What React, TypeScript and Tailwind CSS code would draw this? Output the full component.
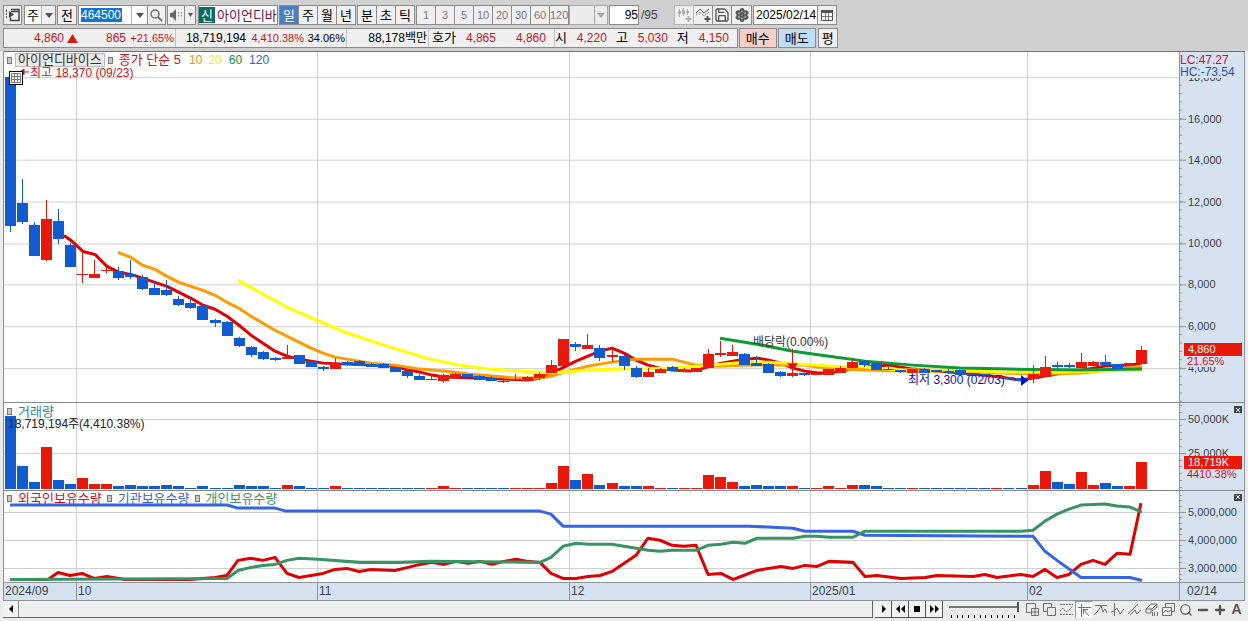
import type { ReactNode } from "react";
import { Minus, Plus, Save, Search, Settings } from "lucide-react";

const UP = "#e8190b";
const DOWN = "#0f5bcf";
const STEP = 12.03;
const FIRST_X = 10.5;

// [direction, high, body top, body bottom, low]
type Candle = ["u" | "d", number, number, number, number];

const CANDLES: Candle[] = [
  ["d", 77, 77, 226, 233], ["d", 179, 203, 222, 224], ["d", 222, 225, 257, 257],
  ["u", 200, 219, 261, 262], ["d", 209, 221, 240, 245], ["d", 244, 246, 268, 268],
  ["u", 254, 275, 276, 284], ["u", 261, 275, 279, 279], ["u", 266, 271, 272, 274],
  ["d", 268, 272, 279, 281], ["d", 261, 275, 278, 280], ["d", 276, 278, 290, 291],
  ["d", 283, 289, 296, 296], ["d", 281, 291, 296, 297], ["d", 297, 300, 306, 307],
  ["d", 301, 304, 309, 310], ["d", 306, 307, 321, 321], ["d", 320, 321, 324, 328],
  ["d", 322, 323, 337, 337], ["d", 338, 339, 347, 348], ["d", 347, 348, 356, 358],
  ["d", 352, 353, 360, 361], ["d", 358, 359, 361, 362], ["u", 346, 358, 360, 360],
  ["d", 356, 356, 365, 365], ["d", 362, 362, 368, 368], ["d", 367, 368, 370, 372],
  ["u", 359, 364, 370, 370], ["d", 362, 363, 366, 366], ["d", 361, 362, 367, 367],
  ["d", 364, 365, 368, 368], ["d", 364, 365, 369, 369], ["d", 368, 368, 373, 373],
  ["d", 371, 372, 377, 379], ["d", 375, 377, 381, 381], ["u", 376, 380, 381, 381],
  ["u", 375, 376, 382, 384], ["u", 374, 375, 379, 379], ["d", 375, 375, 378, 378],
  ["d", 376, 377, 381, 381], ["d", 377, 379, 382, 382], ["d", 379, 382, 383, 384],
  ["u", 375, 380, 381, 381], ["u", 377, 378, 382, 382], ["u", 373, 375, 379, 381],
  ["u", 361, 366, 374, 374], ["u", 340, 340, 367, 367], ["d", 343, 345, 348, 352],
  ["u", 335, 346, 350, 350], ["d", 346, 349, 359, 362], ["u", 351, 356, 358, 363],
  ["d", 356, 357, 367, 371], ["d", 367, 369, 378, 379], ["u", 369, 373, 378, 378],
  ["u", 369, 370, 374, 374], ["d", 367, 368, 372, 372], ["u", 369, 371, 373, 373],
  ["u", 369, 369, 373, 373], ["u", 350, 355, 369, 369], ["u", 342, 354, 356, 358],
  ["u", 346, 353, 357, 357], ["d", 354, 355, 366, 366], ["d", 357, 364, 367, 367],
  ["d", 364, 365, 374, 374], ["d", 372, 373, 377, 378], ["u", 350, 374, 377, 378],
  ["d", 374, 374, 376, 377], ["u", 372, 374, 376, 376], ["u", 370, 370, 376, 376],
  ["u", 367, 369, 374, 374], ["u", 360, 363, 369, 369], ["d", 361, 362, 366, 368],
  ["d", 364, 364, 371, 371], ["d", 368, 370, 371, 371], ["d", 371, 371, 373, 374],
  ["u", 370, 370, 374, 374], ["d", 369, 370, 374, 374], ["d", 371, 371, 373, 373],
  ["d", 370, 372, 374, 375], ["d", 371, 371, 376, 376], ["d", 374, 374, 377, 377],
  ["d", 375, 375, 377, 377], ["u", 376, 376, 378, 378], ["d", 378, 378, 380, 380],
  ["d", 379, 379, 382, 382], ["u", 366, 375, 380, 384], ["u", 357, 368, 378, 378],
  ["d", 363, 366, 368, 370], ["d", 364, 366, 368, 369], ["u", 354, 363, 369, 369],
  ["u", 362, 363, 367, 367], ["d", 356, 363, 366, 366], ["d", 365, 365, 370, 370],
  ["u", 364, 364, 367, 367], ["u", 347, 351, 365, 365],
];

const VOLUMES = [
  72, 22, 6, 41, 8, 4, 10, 4, 4, 2, 3, 2, 2, 3, 2, 1, 2, 1, 1, 3, 2, 2, 1, 3, 2,
  1, 1, 2, 1, 1, 1, 1, 1, 1, 1, 1, 2, 1, 1, 1, 1, 1, 1, 1, 1, 5, 22, 8, 14, 3, 5,
  2, 2, 2, 1, 1, 1, 1, 13, 11, 6, 2, 3, 2, 2, 2, 1, 1, 2, 1, 3, 3, 2, 1, 1, 1, 1,
  1, 1, 1, 1, 1, 1, 1, 1, 3, 17, 6, 4, 16, 3, 5, 2, 2, 26,
];

const AVERAGES = [
  {
    color: "#e00000",
    points:
      "64,236 71,241 83,252 95,255 107,267 119,273 131,275 143,279 155,283 167,287 179,293 191,299 203,306 215,310 227,317 239,326 251,336 263,344 275,352 287,357 299,360 311,362 323,364 347,365 371,366 395,367 408,371 420,373 432,376 444,378 480,379 504,380 528,381 540,379 552,374 564,368 576,362 588,357 600,352 612,349 624,354 636,361 648,366 660,369 672,371 690,372 700,370 721,364 733,362 745,360 757,359 769,361 781,364 793,369 805,372 817,374 829,374 841,372 853,370 865,368 889,366 901,368 913,370 949,373 973,375 1000,378 1021,381 1033,379 1045,377 1057,375 1069,373 1081,371 1093,369 1105,367 1130,366 1142,364",
  },
  {
    color: "#ff9a00",
    points:
      "118,253 131,258 143,266 155,270 167,277 179,283 203,291 215,296 227,303 239,309 251,317 275,331 299,343 311,349 323,354 335,358 347,360 371,364 395,366 420,370 444,372 468,375 492,377 516,379 540,379 552,377 564,373 576,370 588,367 612,363 636,360 672,360 684,363 696,366 721,367 750,366 805,366 817,368 841,370 865,371 900,372 960,372 1000,374 1050,375 1081,374 1100,372 1142,368",
  },
  {
    color: "#ffff00",
    points:
      "238,281 251,288 263,295 275,301 287,308 317,321 345,333 375,343 400,351 430,360 460,366 490,370 520,372 550,374 564,373 590,371 620,370 672,369 700,367 721,365 745,363 769,363 800,365 830,367 865,368 900,371 950,371 1000,373 1060,373 1142,371",
  },
  {
    color: "#0e9a36",
    points:
      "720,339 757,345 793,352 829,357 865,362 913,366 960,369 1010,370 1080,371 1142,370",
  },
];

const HOLDINGS = [
  {
    color: "#e00000",
    points:
      "10,579 48,579 58,572 70,575 82,573 94,578 107,576 125,579 190,579 215,577 227,575 238,560 251,558 263,560 275,557 287,573 299,577 311,575 323,573 335,569 347,568 359,571 371,569 395,570 408,567 420,564 432,562 444,564 456,561 468,563 480,561 492,564 504,561 516,559 528,561 540,562 551,573 563,578 576,578 588,576 600,575 612,571 636,555 648,538 660,540 672,545 684,546 696,545 708,574 721,573 733,579 757,570 781,566 793,568 805,565 817,566 829,561 853,562 865,576 877,575 901,578 925,577 937,575 973,576 985,574 997,577 1021,574 1033,576 1045,569 1057,577 1069,574 1081,564 1093,560 1105,564 1117,553 1130,554 1141,503",
  },
  {
    color: "#3565e3",
    points:
      "10,505 227,505 238,508 275,508 286,511 540,511 551,514 563,526 749,526 793,528 805,531 853,531 865,535 1033,536 1045,551 1057,560 1081,577 1130,577 1142,580",
  },
  {
    color: "#379463",
    points:
      "10,579 227,578 238,570 251,567 263,565 275,564 287,560 299,558 318,559 360,562 400,562 430,561 540,562 551,557 563,546 576,543 588,544 612,544 624,546 648,550 660,551 672,550 696,550 708,545 721,544 733,542 745,543 757,538 793,538 805,536 817,536 829,537 853,537 865,531 1021,531 1033,530 1045,521 1057,514 1069,509 1081,505 1105,504 1117,506 1130,507 1142,512",
  },
];

const MONTH_LINES = [76, 317, 569, 810, 1027];

const MONTHS = [
  { x: 4, label: "2024/09" },
  { x: 76, label: "10" },
  { x: 317, label: "11" },
  { x: 569, label: "12" },
  { x: 810, label: "2025/01" },
  { x: 1027, label: "02" },
];

const PLOT = { left: 4, width: 1175 };

const pctX = (x: number) => `${((x - PLOT.left) / PLOT.width) * 100}%`;
const pctY = (y: number, top: number, height: number) =>
  `${((y - top) / height) * 100}%`;

function Arrow({ className = "text-zinc-600" }: { className?: string }) {
  return (
    <svg width="8" height="5" viewBox="0 0 8 5" className={className} aria-hidden="true">
      <path d="M0 0h8L4 5z" fill="currentColor" />
    </svg>
  );
}

function ToolButton({
  label,
  className = "w-5",
  children,
}: {
  label?: string;
  className?: string;
  children: ReactNode;
}) {
  return (
    <button
      type="button"
      aria-label={label}
      className={`flex h-5 shrink-0 items-center justify-center border border-[#8c8c8c] bg-[#f0f0f0] ${className}`}
    >
      {children}
    </button>
  );
}

function ButtonStrip({
  items,
  className,
}: {
  items: string[];
  className: string;
}) {
  return (
    <div className="flex h-5 border-y border-l border-[#8c8c8c]">
      {items.map((item) => (
        <button
          key={item}
          type="button"
          className={`w-[19px] border-r border-[#8c8c8c] text-center ${item === "일" ? "bg-[#4a7ec4] text-white" : "bg-[#f0f0f0]"} ${className}`}
        >
          {item}
        </button>
      ))}
    </div>
  );
}

function Toolbar() {
  return (
    <div className="flex h-5 items-center text-[13px] leading-none text-black">
      <ToolButton label="창 연결" className="w-[19px]">
        <svg width="14" height="14" viewBox="0 0 14 14" fill="none" stroke="#444" aria-hidden="true">
          <path d="M5 1.500h8v11H4.500v-3M5 3.500h8" strokeWidth="1.500" />
          <path d="M.5 2v9" strokeDasharray="2 1" />
          <path d="M3 3l5 3.500L3 10z" fill="#444" stroke="none" />
        </svg>
      </ToolButton>

      <div className="ml-0.5 flex h-5 w-8 border border-[#8c8c8c] bg-white">
        <select aria-label="종목 구분" className="w-4 appearance-none pl-0.5">
          <option>주</option>
        </select>
        <span className="flex flex-1 items-center justify-center border-l border-[#b5b5b5] bg-[#f0f0f0]">
          <Arrow />
        </span>
      </div>

      <ToolButton className="ml-px w-5">전</ToolButton>

      <div className="ml-px flex h-5 w-[70px] items-center border border-[#8c8c8c] bg-white">
        <input
          aria-label="종목코드"
          defaultValue="464500"
          className="ml-0.5 h-3.5 w-[41px] bg-[#0f76d2] text-xs leading-none text-white outline-none"
        />
        <button type="button" aria-label="종목 목록" className="ml-auto flex h-full w-4 items-center justify-center border-l border-[#b5b5b5]">
          <Arrow />
        </button>
      </div>
      <ToolButton label="종목 검색" className="w-[18px] border-l-0">
        <svg width="13" height="13" viewBox="0 0 13 13" fill="none" stroke="#707070" aria-hidden="true">
          <circle cx="5" cy="5" r="4" strokeWidth="1.500" />
          <path d="M8 8l4 4" strokeWidth="2" />
        </svg>
      </ToolButton>

      <div className="ml-px flex">
        <ToolButton label="음성" className="w-[18px]">
          <svg width="13" height="12" viewBox="0 0 13 12" aria-hidden="true">
            <path d="M0 4h2l4-4v12L2 8H0z" fill="#666" />
            <path d="M8.500 3v6M11.500 3v6" stroke="#777" strokeDasharray="1.500 1.500" />
          </svg>
        </ToolButton>
        <ToolButton label="음성 설정" className="w-[11px] border-l-0">
          <svg width="5" height="4" viewBox="0 0 5 4" aria-hidden="true">
            <path d="M0 0h5L2.500 4z" fill="#555" />
          </svg>
        </ToolButton>
      </div>

      <div className="ml-0.5 flex h-5 w-20 items-center overflow-hidden border border-[#8c8c8c] bg-white">
        <span className="flex h-4 w-4 shrink-0 items-center justify-center bg-[#0b6b60] text-white">
          신
        </span>
        <span className="ml-0.5 whitespace-nowrap text-[#6b1450]">아이언디바</span>
      </div>

      <div className="ml-px flex gap-px">
        <ButtonStrip items={["일", "주", "월", "년"]} className="text-[13px]" />
        <ButtonStrip items={["분", "초", "틱"]} className="text-[13px]" />
        <ButtonStrip
          items={["1", "3", "5", "10", "20", "30", "60", "120"]}
          className="text-[11px] text-[#7c7c7c]"
        />
      </div>

      <div className="flex h-5 w-[39px] border border-[#a8a8a8] bg-[#ececec]">
        <select disabled aria-label="사용자 주기" className="w-6 appearance-none" />
        <span className="flex flex-1 items-center justify-center border-l border-[#a8a8a8]">
          <Arrow className="text-[#a8a8a8]" />
        </span>
      </div>

      <input
        aria-label="조회 개수"
        defaultValue="95"
        className="ml-px h-5 w-[30px] border border-[#8c8c8c] bg-white text-right text-xs text-black outline-none"
      />
      <span className="ml-0.5 w-[33px] text-xs text-[#444]">/95</span>

      <div className="flex">
        <ToolButton label="봉 추가" className="w-5 border-[#b5b5b5]">
          <svg width="15" height="14" viewBox="0 0 15 14" stroke="#b0b0b0" fill="#b0b0b0" aria-hidden="true">
            <path d="M2.500 1v8M6.500 0v8M10.500 1v6" />
            <path d="M1 3h3v3H1zM5 2h3v4H5zM9 3h3v2H9z" stroke="none" />
            <path d="M11.500 8v6M8.500 11h6" strokeWidth="2" />
          </svg>
        </ToolButton>
        <ToolButton label="지표 추가" className="w-[19px] border-l-0">
          <svg width="15" height="14" viewBox="0 0 15 14" fill="none" stroke="#555" aria-hidden="true">
            <path d="M0 5l4-4 4 4 5-4" />
            <path d="M0 7l4-3 4 4 5-4" strokeDasharray="1 1" />
            <path d="M11.500 8v6M8.500 11h6" strokeWidth="2" />
          </svg>
        </ToolButton>
        <ToolButton label="저장" className="w-[19px] border-l-0">
          <Save size={16} color="#555" strokeWidth={2} />
        </ToolButton>
        <ToolButton label="설정" className="w-5 border-l-0">
          <Settings size={14} color="#555" strokeWidth={4} />
        </ToolButton>
      </div>

      <input
        aria-label="기준일"
        defaultValue="2025/02/14"
        className="ml-px h-5 w-[65px] border border-[#8c8c8c] bg-white pl-0.5 text-xs text-black outline-none"
      />
      <ToolButton label="달력" className="w-[19px] border-l-0">
        <svg width="12" height="11" viewBox="0 0 12 11" aria-hidden="true">
          <path d="M.5.500h11v10H.500z" fill="#fff" stroke="#555" />
          <path d="M0 0h12v3H0z" fill="#555" />
          <path d="M4.500 3v7M7.500 3v7M1 6.500h10" stroke="#777" />
        </svg>
      </ToolButton>
    </div>
  );
}

function Quote({
  className,
  children,
}: {
  className: string;
  children: ReactNode;
}) {
  return <span className={`shrink-0 text-right ${className}`}>{children}</span>;
}

function QuoteBar() {
  return (
    <div className="mt-[3px] flex h-5 text-xs text-[#c8141c]">
      <div className="flex items-center whitespace-nowrap border border-[#8c8c8c] bg-[#f0f0f0] pr-2 leading-[18px]">
        <div className="flex items-center border-r border-[#c4c4c4] pr-px">
          <Quote className="w-[60px]">4,860</Quote>
          <svg width="11" height="9" viewBox="0 0 11 9" className="ml-[3px]" aria-hidden="true">
            <path d="M5.500 0L11 9H0z" fill="#d81e10" />
          </svg>
          <Quote className="w-12">865</Quote>
          <Quote className="w-12 text-[11px]">+21.65%</Quote>
        </div>
        <div className="flex border-r border-[#c4c4c4] pr-px">
          <Quote className="w-[70px] text-black">18,719,194</Quote>
          <Quote className="w-[58px] text-[11px]">4,410.38%</Quote>
          <Quote className="w-[41px] text-[11px] text-black">34.06%</Quote>
        </div>
        <div className="border-r border-[#c4c4c4] pr-px">
          <Quote className="inline-block w-20 text-black">88,178백만</Quote>
        </div>
        <div className="flex border-r border-[#c4c4c4] pr-2">
          <span className="ml-[3px] text-[13px] text-black">호가</span>
          <Quote className="w-10">4,865</Quote>
          <Quote className="w-[50px]">4,860</Quote>
        </div>
        <span className="text-[13px] text-black">시</span>
        <Quote className="w-10">4,220</Quote>
        <span className="ml-[9px] text-[13px] text-black">고</span>
        <Quote className="w-10">5,030</Quote>
        <span className="ml-[9px] text-[13px] text-black">저</span>
        <Quote className="w-10">4,150</Quote>
      </div>
      <button type="button" className="ml-px w-[38px] border border-[#8c8c8c] bg-[#f6cfcb] text-[13px] leading-none text-black">
        매수
      </button>
      <button type="button" className="ml-px w-[38px] border border-[#8c8c8c] bg-[#c3dcf6] text-[13px] leading-none text-black">
        매도
      </button>
      <button type="button" className="ml-0.5 w-5 border border-[#8c8c8c] bg-[#f0f0f0] text-[13px] leading-none text-black">
        평
      </button>
    </div>
  );
}

function Plot({
  top,
  height,
  rows,
  children,
}: {
  top: number;
  height: number;
  rows: number[];
  children: ReactNode;
}) {
  return (
    <svg
      className="absolute inset-0 h-full w-full"
      viewBox={`${PLOT.left} ${top} ${PLOT.width} ${height}`}
      preserveAspectRatio="none"
      aria-hidden="true"
    >
      <g stroke="#d0d0d0" shapeRendering="crispEdges">
        {rows.map((y) => (
          <line key={y} x1="4" x2="1179" y1={y + 0.5} y2={y + 0.5} />
        ))}
        {MONTH_LINES.map((x) => (
          <line key={x} x1={x + 0.5} x2={x + 0.5} y1={top} y2={top + height} />
        ))}
      </g>
      {children}
    </svg>
  );
}

function Lines({ items }: { items: { color: string; points: string }[] }) {
  return (
    <g fill="none" strokeWidth="3" strokeLinejoin="round">
      {items.map((l) => (
        <polyline key={l.color} points={l.points} stroke={l.color} />
      ))}
    </g>
  );
}

function Axis({
  top,
  height,
  labels,
  minor,
  closable = false,
  children,
}: {
  top: number;
  height: number;
  labels: { y: number; text: string }[];
  minor: number;
  closable?: boolean;
  children?: ReactNode;
}) {
  const start = labels[0].y;
  const ticks: number[] = [];
  for (let y = start - minor * 5; y < top + height; y += minor) {
    if (y > top) ticks.push(y);
  }
  return (
    <div className="relative w-[66px] shrink-0 overflow-hidden border-x border-[#8f959c] bg-[#d6e2f0] text-xs leading-3 text-[#3c4248]">
      <svg
        className="absolute inset-0 h-full w-full"
        viewBox={`0 ${top} 64 ${height}`}
        preserveAspectRatio="none"
        stroke="#8f959c"
        shapeRendering="crispEdges"
        aria-hidden="true"
      >
        {ticks.map((y) => (
          <line key={y} x1="0" x2="2" y1={y} y2={y} />
        ))}
        {labels.map((l) => (
          <line key={l.y} x1="0" x2="6" y1={l.y + 0.5} y2={l.y + 0.5} />
        ))}
      </svg>
      {labels.map((l) => (
        <span
          key={l.text}
          className="absolute left-2 -translate-y-1/2 text-[11px]"
          style={{ top: pctY(l.y, top, height) }}
        >
          {l.text}
        </span>
      ))}
      {children}
      {closable ? (
        <button type="button" aria-label="닫기" className="absolute right-0.5 top-[3px] flex h-[7px] w-2 items-center justify-center bg-[#3e4650]">
          <svg width="4" height="4" viewBox="0 0 4 4" stroke="#fff" aria-hidden="true">
            <path d="M0 0l4 4M4 0L0 4" />
          </svg>
        </button>
      ) : null}
    </div>
  );
}

function Marker() {
  return <span className="h-[7px] w-[5px] shrink-0 border border-[#777] bg-[#c8c8c8]" />;
}

function PricePanel() {
  return (
    <section className="flex min-h-0 flex-[352] border-t border-[#6f6f6f]">
      <div className="relative min-w-0 flex-1 overflow-hidden bg-white">
        <Plot top={52} height={351} rows={[77, 119, 160, 202, 244, 285, 327, 369]}>
          <Lines items={AVERAGES} />
          <g shapeRendering="crispEdges">
            {CANDLES.map(([dir, high, top, bottom, low], i) => {
              const x = Math.round(FIRST_X + i * STEP - 0.5);
              const color = dir === "u" ? UP : DOWN;
              return (
                <g key={i} fill={color}>
                  <rect x={x} y={high} width="1" height={low - high} />
                  <rect x={x - 5} y={top} width="11" height={bottom - top} />
                </g>
              );
            })}
          </g>
          <path d="M20 72h9M20 72l4-3v6z" stroke="#c8141c" fill="#c8141c" />
          <path d="M792.500 351v15" stroke="#e01010" />
          <path d="M787 364h11l-5.500 7z" fill="#e01010" />
          <path d="M1021 376l7 5.500-7 5.500z" fill="#0808e0" />
        </Plot>

        <div className="absolute left-[3px] top-px flex items-center whitespace-nowrap text-xs leading-[14px]">
          <Marker />
          <span className="ml-[3px] border border-[#bbb] bg-[#ebebeb] px-0.5 text-[13px] leading-3 text-[#333]">
            아이언디바이스
          </span>
          <span className="ml-[3px] flex"><Marker /></span>
          <span className="ml-1.5 text-[13px] text-[#c8141c]">종가 단순 5</span>
          <span className="ml-2 text-[#e8921c]">10</span>
          <span className="ml-1.5 text-[#f4f000]">20</span>
          <span className="ml-[7px] text-[#118a35]">60</span>
          <span className="ml-[7px] text-[#2f62c8]">120</span>
        </div>
        <span
          className="absolute -translate-y-1/2 whitespace-nowrap text-xs leading-3 text-[#c8141c]"
          style={{ left: pctX(30), top: pctY(73, 52, 351) }}
        >
          최고 18,370 (09/23)
        </span>
        <button type="button" aria-label="데이터 표" className="absolute left-[5px] top-[19px] flex h-3.5 w-3.5 items-center justify-center border border-black bg-white">
          <svg width="10" height="10" viewBox="0 0 10 10" fill="none" stroke="#777" aria-hidden="true">
            <path d="M.5.500h9v9h-9zM3.500 0v10M6.500 0v10M0 3.500h10M0 6.500h10" />
          </svg>
        </button>
        <span
          className="absolute -translate-y-1/2 whitespace-nowrap text-xs leading-3 text-[#333]"
          style={{ left: pctX(753), top: pctY(343, 52, 351) }}
        >
          배당락(0.00%)
        </span>
        <span
          className="absolute -translate-y-1/2 whitespace-nowrap text-xs leading-3 text-[#1010a8]"
          style={{ left: pctX(908), top: pctY(381, 52, 351) }}
        >
          최저 3,300 (02/03)
        </span>
      </div>
      <Axis
        top={52}
        height={351}
        minor={8.34}
        labels={[
          { y: 77, text: "18,000" },
          { y: 119, text: "16,000" },
          { y: 160, text: "14,000" },
          { y: 202, text: "12,000" },
          { y: 244, text: "10,000" },
          { y: 285, text: "8,000" },
          { y: 327, text: "6,000" },
          { y: 369, text: "4,000" },
        ]}
      >
        <div className="absolute left-0 top-0.5 bg-[#d6e2f0]">
          <p className="text-[#c8143c]">LC:47.27</p>
          <p className="text-[#1d52bd]">HC:-73.54</p>
        </div>
        <div
          className="absolute left-1 w-[58px] text-[11px]"
          style={{ top: pctY(344, 52, 351) }}
        >
          <p className="bg-[#e8190b] pl-1 leading-[13px] text-white">4,860</p>
          <p className="w-10 bg-[#d6e2f0] pl-[3px] leading-[11px] text-[#c8141c]">21.65%</p>
        </div>
      </Axis>
    </section>
  );
}

function VolumePanel() {
  return (
    <section className="flex min-h-0 flex-[87] border-t border-[#85898e]">
      <div className="relative min-w-0 flex-1 overflow-hidden bg-white">
        <Plot top={404} height={86} rows={[420, 454]}>
          <g shapeRendering="crispEdges">
            {VOLUMES.map((v, i) => (
              <rect
                key={i}
                x={Math.round(FIRST_X + i * STEP - 0.5) - 5}
                y={489 - v}
                width="11"
                height={v}
                fill={CANDLES[i][0] === "u" ? UP : DOWN}
              />
            ))}
          </g>
        </Plot>
        <div className="absolute left-[3px] top-0.5 whitespace-nowrap text-xs leading-[13px]">
          <div className="flex items-center text-[13px] text-[#2b8790]">
            <Marker />
            <span className="ml-1.5">거래량</span>
          </div>
          <p className="ml-px text-[#222]">18,719,194주(4,410.38%)</p>
        </div>
      </div>
      <Axis
        top={404}
        height={86}
        minor={6.8}
        closable
        labels={[
          { y: 420, text: "50,000K" },
          { y: 454, text: "25,000K" },
        ]}
      >
        <div
          className="absolute left-1 w-[58px] text-[11px]"
          style={{ top: pctY(457, 404, 86) }}
        >
          <p className="bg-[#e8190b] pl-1 leading-[13px] text-white">18,719K</p>
          <p className="pl-[3px] leading-[11px] text-[#c8141c]">4410.38%</p>
        </div>
      </Axis>
    </section>
  );
}

function HoldingsPanel() {
  return (
    <section className="flex min-h-0 flex-[92] border-t border-[#85898e]">
      <div className="relative min-w-0 flex-1 overflow-hidden bg-white">
        <div className="absolute left-[3px] top-px flex items-center whitespace-nowrap text-[13px] leading-[14px]">
          <Marker />
          <span className="ml-1.5 text-[#d0101c]">외국인보유수량</span>
          <span className="ml-[5px] flex"><Marker /></span>
          <span className="ml-1.5 text-[#3565d8]">기관보유수량</span>
          <span className="ml-[5px] flex"><Marker /></span>
          <span className="ml-1.5 text-[#379463]">개인보유수량</span>
        </div>
        <Plot top={491} height={91} rows={[512, 540, 568]}>
          <Lines items={HOLDINGS} />
        </Plot>
      </div>
      <Axis
        top={491}
        height={91}
        minor={5.6}
        closable
        labels={[
          { y: 512, text: "5,000,000" },
          { y: 540, text: "4,000,000" },
          { y: 568, text: "3,000,000" },
        ]}
      />
    </section>
  );
}

function DateStrip() {
  return (
    <div className="flex h-[19px] border-y border-[#8f959c] bg-[#d6e2f0] text-xs leading-4 text-[#3c4248]">
      <div className="relative flex-1">
        {MONTHS.map((m, i) => (
          <span
            key={m.label}
            className={`absolute inset-y-0 pl-px ${i > 0 ? "border-l border-[#8f959c]" : ""}`}
            style={{ left: pctX(m.x) }}
          >
            {m.label}
          </span>
        ))}
      </div>
      <span className="w-[66px] border-x border-[#8f959c] pl-[7px]">02/14</span>
    </div>
  );
}

const PLAYBACK = [
  { label: "재생", d: "M6 3l4 4-4 4z" },
  { label: "뒤로", d: "M7 3L3 7l4 4zM12 3L8 7l4 4z" },
  { label: "정지", d: "M4 4h6v6H4z" },
  { label: "앞으로", d: "M3 3l4 4-4 4zM8 3l4 4-4 4z" },
];

const CHART_TOOLS = [
  { label: "창 추가", d: "M5 9.500H.500v-9h9V5M5.500 5.500h7v7h-7zM9 5.500v7M5.500 9h7" },
  { label: "창 겹치기", d: "M4 8.500H.500v-8h8V4M4.500 4.500h8v8h-8z" },
  { label: "추세 영역", d: "M0 1.500h13M0 11.500h13M0 8l3-3 3 4 3-2 4-4", dash: "2 1" },
  { label: "십자선", d: "M0 3.500h13M3.500 0v13M5 5l6 7M5.500 5v5M5 5.500h5" },
  { label: "수평선", d: "M1 2.500h12M0 12l4-4 3-5 2 6 2-3 2 4" },
  { label: "수직선", d: "M3.500 0v13M0 9l3-1 3-3 3 6 4-5" },
  { label: "추세선", d: "M0 11L10 1M2 12l5-5 2 4 4-4" },
  { label: "지우기", d: "M1 6l5-5h6l-5 5zM1 6v4h5V6M7 8l5-4V1M7.500 9v4M9.500 9v4M12.500 9v4" },
  { label: "차트 복사", d: "M3.500 4V.500h9v8H10M.500 4.500h9v8h-9zM1 10l3-3 2 2 3-2" },
];

function BottomBar() {
  return (
    <div className="flex h-[17px] items-center text-black">
      <div className="flex h-[17px] min-w-0 flex-1 border-b border-r border-[#666] bg-[#efefef]">
        <button type="button" aria-label="왼쪽으로" className="ml-px flex w-[15px] items-center justify-center border-r border-[#8c8c8c] bg-[#f4f4f4]">
          <svg width="4" height="8" viewBox="0 0 4 8" aria-hidden="true">
            <path d="M4 0v8L0 4z" />
          </svg>
        </button>
      </div>
      <div className="ml-0.5 flex">
        {PLAYBACK.map((p) => (
          <button key={p.label} type="button" aria-label={p.label} className="flex h-[17px] w-[17px] items-center justify-center border-b border-r border-[#555] bg-[#f2f2f2]">
            <svg width="14" height="14" viewBox="0 0 14 14" aria-hidden="true">
              <path d={p.d} />
            </svg>
          </button>
        ))}
      </div>
      <div className="ml-1.5 flex h-4 w-[70px] flex-col justify-between">
        <input
          type="range"
          aria-label="재생 속도"
          defaultValue="100"
          className="mt-1 h-0.5 w-full appearance-none bg-[#777] [&::-webkit-slider-thumb]:h-2.5 [&::-webkit-slider-thumb]:w-0.5 [&::-webkit-slider-thumb]:appearance-none [&::-webkit-slider-thumb]:bg-[#555]"
        />
        <div className="flex justify-between pl-0.5 pr-1">
          {Array.from({ length: 12 }, (_, i) => (
            <span key={i} className="h-[3px] w-px bg-black" />
          ))}
        </div>
      </div>
      <div className="ml-[5px] flex">
        {CHART_TOOLS.map((t) => (
          <button
            key={t.label}
            type="button"
            aria-label={t.label}
            className={`flex h-[17px] w-[17px] items-center justify-center ${t.label === "십자선" ? "border-l border-t border-[#999] bg-white" : ""}`}
          >
            <svg width="13" height="13" viewBox="0 0 13 13" fill="none" stroke="#707070" strokeDasharray={t.dash} aria-hidden="true">
              <path d={t.d} />
            </svg>
          </button>
        ))}
        <button type="button" aria-label="돋보기" className="flex w-[17px] items-center justify-center">
          <Search size={14} color="#555" strokeWidth={2} />
        </button>
        <button type="button" aria-label="축소" className="flex w-[17px] items-center justify-center">
          <Minus size={14} color="#555" strokeWidth={4} />
        </button>
        <button type="button" aria-label="확대" className="flex w-[17px] items-center justify-center">
          <Plus size={14} color="#555" strokeWidth={4} />
        </button>
        <button type="button" className="w-[17px] text-center text-sm font-bold leading-[17px] text-[#555]">
          A
        </button>
      </div>
    </div>
  );
}

export default function App() {
  return (
    <div className="flex min-h-screen flex-col bg-[#ececec] font-['Liberation_Sans','Noto_Sans_CJK_KR',sans-serif]">
      <header className="h-[51px] bg-[#d0d0d0] px-[3px] pt-[5px]">
        <Toolbar />
        <QuoteBar />
      </header>
      <main className="flex flex-1 flex-col px-[3px] pb-[3px]">
        <div className="flex flex-1 flex-col border-l border-[#8c8c8c]">
          <PricePanel />
          <VolumePanel />
          <HoldingsPanel />
          <DateStrip />
        </div>
        <BottomBar />
      </main>
    </div>
  );
}
